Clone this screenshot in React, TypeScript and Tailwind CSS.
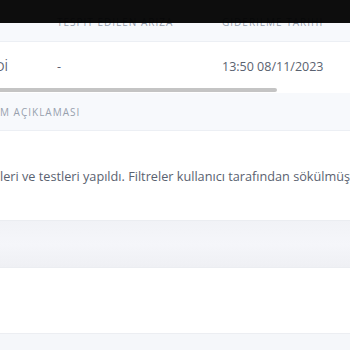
import React from 'react';

const headCls = "text-[10px] font-normal uppercase tracking-[0.1em] text-[#98a1ae] whitespace-nowrap";

export default function App() {
  return (
    <div className="relative w-[350px] h-[350px] overflow-hidden bg-white font-['Open_Sans',sans-serif]">
      {/* top bar over the table header */}
      <div className="absolute top-0 left-0 w-full h-[23px] bg-black/95 z-10" />

      {/* table, scrolled sideways */}
      <div className="overflow-hidden">
        <div className="flex items-center h-[42px] pt-[4px] bg-[#f7f9fc] border-b border-[#eceff4]">
          <div className="w-[57px] shrink-0" />
          <div className={`w-[165px] shrink-0 ${headCls}`}>Tespit Edilen Arıza</div>
          <div className={headCls}>Giderilme Tarihi</div>
        </div>
        <div className="flex items-center h-[46px] pt-[4px] text-[12.5px] text-[#5a6270]">
          <div className="w-[8px] shrink-0 overflow-hidden flex justify-end whitespace-nowrap">
            <span>TAMAMLANDİ</span>
          </div>
          <div className="w-[49px] shrink-0" />
          <div className="w-[165px] shrink-0">-</div>
          <div className="whitespace-nowrap">13:50 08/11/2023</div>
        </div>
        <div className="h-[5px] bg-white">
          <div className="w-[277px] h-[4px] bg-[#c4c4c4] rounded-r-sm" />
        </div>
      </div>

      {/* description section */}
      <div className="flex items-center h-[38px] pt-[1px] bg-[#f7f9fc] border-b border-[#eceff4]">
        <span className={headCls}>M Açıklaması</span>
      </div>
      <div className="h-[89px] flex items-center pt-[2px]">
        <p className="whitespace-nowrap text-[12.7px] text-[#5a6270]">
          leri ve testleri yapıldı. Filtreler kullanıcı tarafından sökülmüş
        </p>
      </div>

      <div className="h-[48px] bg-gradient-to-b from-[#f1f2f6] via-[#f5f6fa] to-[#eff0f4] border-y border-[#ebedf1]" />
      <div className="h-[65px] bg-white" />
      <div className="h-[20px] bg-[#f5f7fa] border-t border-[#eceef2]" />
    </div>
  );
}
